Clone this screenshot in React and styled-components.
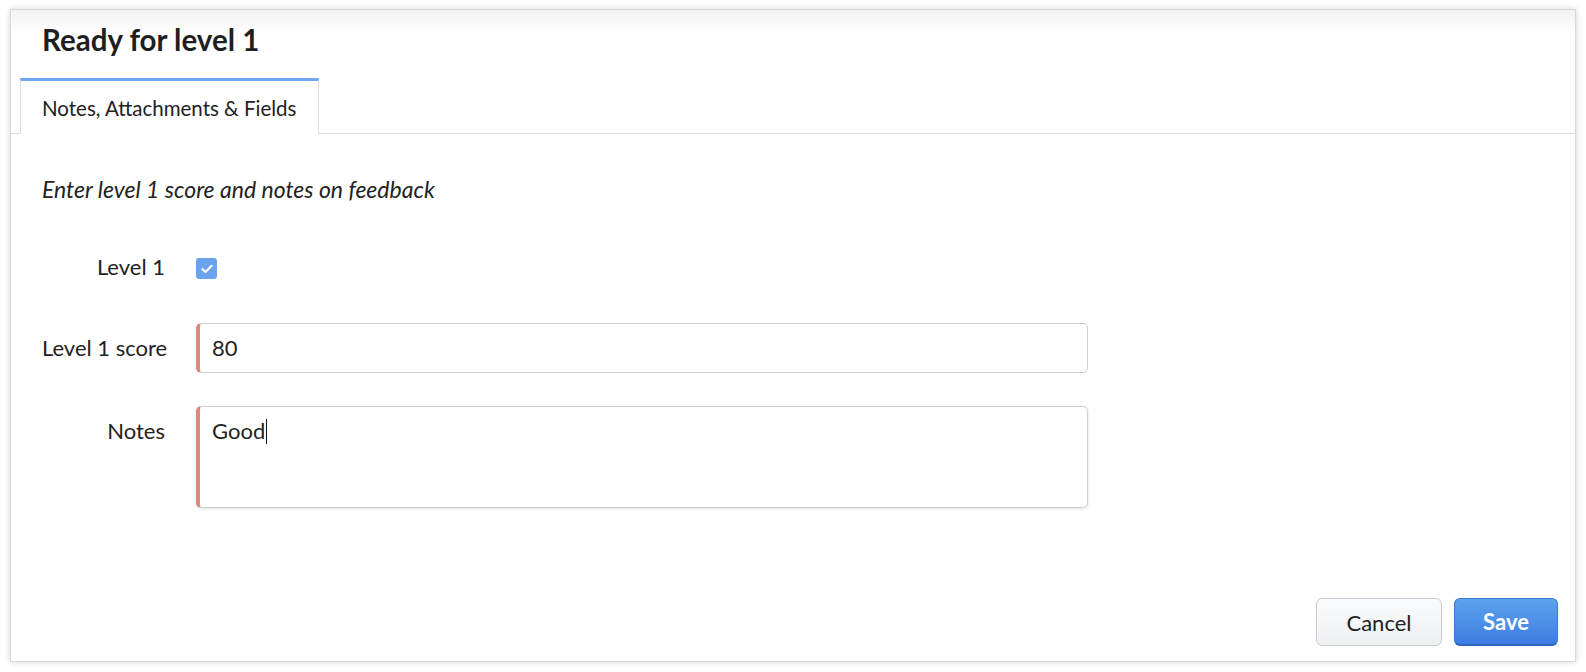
import React from "react";
import styled, { createGlobalStyle } from "styled-components";

const Global = createGlobalStyle`
  html, body { margin: 0; padding: 0; background: #fff; }
  body { font-family: Lato, "Open Sans", sans-serif; color: #222; }
  * { box-sizing: border-box; }
`;

const Page = styled.div`
  padding: 9px 10px 10px 10px;
  width: 1586px;
  height: 672px;
`;

const Window = styled.div`
  width: 1566px;
  height: 653px;
  border: 1px solid #d9d9d9;
  background: #fff;
  box-shadow: 0 0 6px rgba(0, 0, 0, 0.18);
  display: flex;
  flex-direction: column;
`;

const Header = styled.div`
  height: 68px;
  padding: 13px 0 0 31px;
  background: linear-gradient(#f2f2f2 0px, #ffffff 26px);
`;

const Title = styled.h1`
  margin: 0;
  font-size: 29.5px;
  font-weight: 700;
  color: #1f1f1f;
  line-height: 34px;
`;

const TabStrip = styled.div`
  display: flex;
  padding-left: 9px;
  border-bottom: 1px solid #dcdcdc;
  height: 56px;
`;

const Tab = styled.div`
  width: 299px;
  height: 56px;
  border-top: 3px solid #6fa8ee;
  border-left: 1px solid #dcdcdc;
  border-right: 1px solid #dcdcdc;
  background: #fff;
  margin-bottom: -1px;
  padding: 0 0 0 21px;
  display: flex;
  align-items: center;
  font-size: 20.5px;
  color: #222;
`;

const Body = styled.div`
  flex: 1;
  padding: 41px 0 0 31px;
  display: flex;
  flex-direction: column;
`;

const Hint = styled.p`
  margin: 0;
  font-style: italic;
  font-size: 23px;
  line-height: 28px;
  color: #222;
`;

const Form = styled.div`
  display: grid;
  grid-template-columns: 123px 892px;
  column-gap: 31px;
  margin-top: 51px;
`;

const Label = styled.label`
  font-size: 22px;
  text-align: right;
  color: #222;
  white-space: nowrap;
  line-height: 26px;
  padding-top: ${(p) => p.$top || 0}px;
  margin-bottom: ${(p) => p.$gap || 0}px;
`;

const Cell = styled.div`
  margin-bottom: ${(p) => p.$gap || 0}px;
`;

const Check = styled.span`
  display: inline-flex;
  width: 21px;
  height: 21px;
  border-radius: 3px;
  background: #6ba3ec;
  align-items: center;
  justify-content: center;
  margin-top: 4px;
`;

const Field = styled.div`
  height: ${(p) => p.$h}px;
  border: 1px solid #cfcfcf;
  border-left: 4px solid #dc8a80;
  border-radius: 5px;
  padding: ${(p) => (p.$multi ? "11px" : "0")} 12px 0 12px;
  display: flex;
  align-items: ${(p) => (p.$multi ? "flex-start" : "center")};
  font-size: 22px;
  color: #1f1f1f;
  box-shadow: ${(p) => (p.$multi ? "0 1px 3px rgba(0,0,0,0.12)" : "none")};
  line-height: 26px;
`;

const Caret = styled.span`
  display: inline-block;
  width: 1px;
  height: 25px;
  background: #111;
  margin-left: 1px;
  vertical-align: -5px;
`;

const Footer = styled.div`
  margin-top: auto;
  display: flex;
  justify-content: flex-end;
  gap: 12px;
  padding: 0 17px 15px 0;
`;

const Button = styled.button`
  height: 48px;
  border-radius: 6px;
  font-family: Lato, sans-serif;
  font-size: 22px;
  cursor: pointer;
  width: ${(p) => p.$w}px;
  ${(p) =>
    p.$primary
      ? `
    background: linear-gradient(#5ca3ec, #3d7ce2);
    border: 1px solid #3a78d8;
    border-bottom: 2px solid #2f63bd;
    color: #fff;
    font-weight: 700;
  `
      : `
    background: linear-gradient(#fafbfc, #eef0f3);
    border: 1px solid #c9ccd2;
    color: #222;
  `}
`;

export default function App() {
  return (
    <>
      <Global />
      <Page>
        <Window>
          <Header>
            <Title>Ready for level 1</Title>
          </Header>
          <TabStrip>
            <Tab>Notes, Attachments &amp; Fields</Tab>
          </TabStrip>
          <Body>
            <Hint>Enter level 1 score and notes on feedback</Hint>
            <Form>
              <Label $gap={43}>Level 1</Label>
              <Cell $gap={43}>
                <Check>
                  <svg width="12" height="10" viewBox="0 0 12 10">
                    <path d="M1.5 5.2 L4.5 8 L10.5 1.8" fill="none" stroke="#fff" strokeWidth="2.2" strokeLinecap="round" strokeLinejoin="round" />
                  </svg>
                </Check>
              </Cell>
              <Label $top={12} $gap={33}>Level 1 score</Label>
              <Cell $gap={33}>
                <Field $h={50}>80</Field>
              </Cell>
              <Label $top={12}>Notes</Label>
              <Cell>
                <Field $h={102} $multi>
                  <span>Good<Caret /></span>
                </Field>
              </Cell>
            </Form>
          </Body>
          <Footer>
            <Button $w={126}>Cancel</Button>
            <Button $w={104} $primary>Save</Button>
          </Footer>
        </Window>
      </Page>
    </>
  );
}
